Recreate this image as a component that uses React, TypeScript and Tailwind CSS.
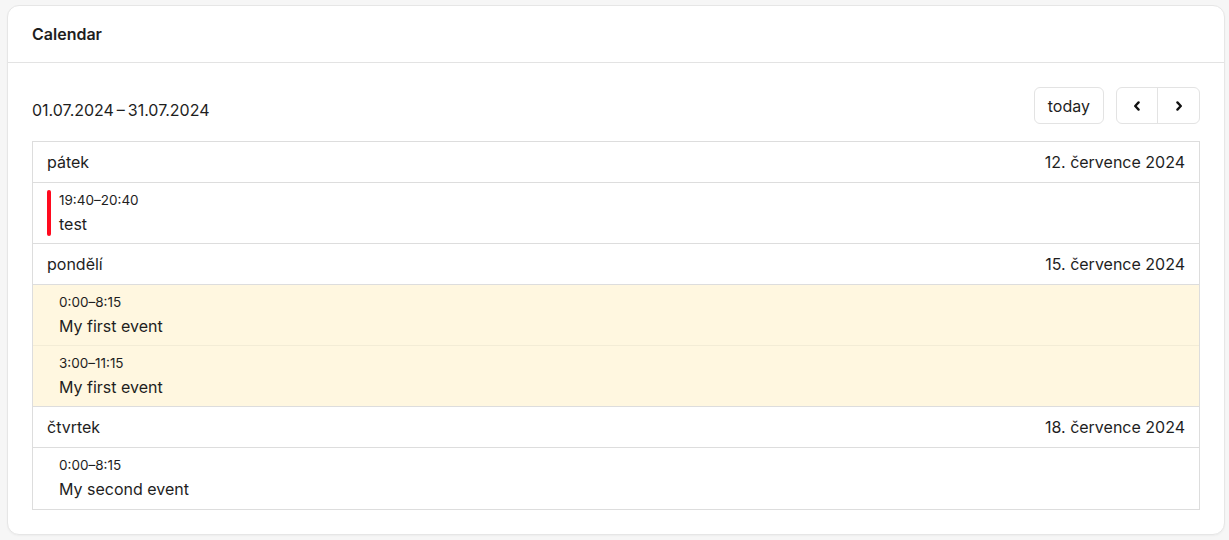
import React from 'react';

type CalEvent = { time: string; title: string; bar?: string; bg?: string };
type Day = { name: string; date: string; events: CalEvent[] };

const days: Day[] = [
  {
    name: 'pátek',
    date: '12. července 2024',
    events: [{ time: '19:40–20:40', title: 'test', bar: '#ff0a1e' }],
  },
  {
    name: 'pondělí',
    date: '15. července 2024',
    events: [
      { time: '0:00–8:15', title: 'My first event', bg: '#fff7e0' },
      { time: '3:00–11:15', title: 'My first event', bg: '#fff7e0' },
    ],
  },
  {
    name: 'čtvrtek',
    date: '18. července 2024',
    events: [{ time: '0:00–8:15', title: 'My second event' }],
  },
];

function ChevronLeft() {
  return (
    <svg width="10" height="10" viewBox="0 0 10 10" fill="none">
      <path d="M6.6 1.4L3.2 5l3.4 3.6" stroke="#111" strokeWidth="2.3" strokeLinecap="round" strokeLinejoin="round" />
    </svg>
  );
}

function ChevronRight() {
  return (
    <svg width="10" height="10" viewBox="0 0 10 10" fill="none">
      <path d="M3.4 1.4L6.8 5 3.4 8.6" stroke="#111" strokeWidth="2.3" strokeLinecap="round" strokeLinejoin="round" />
    </svg>
  );
}

function EventRow({ ev, first, last }: { ev: CalEvent; first: boolean; last: boolean }) {
  return (
    <div
      className={`flex gap-[8px] px-[14px] pt-[7px] pb-[7px] ${first ? (last ? 'h-[61px]' : 'h-[60px]') : 'h-[61px] border-t border-[#f3ecd6]'}`}
      style={{ backgroundColor: ev.bg || '#ffffff' }}>
      <div className="w-[4px] rounded-full" style={{ backgroundColor: ev.bar || 'transparent' }} />
      <div className="flex flex-col">
        <span className="text-[13.5px] leading-[20px]">{ev.time}</span>
        <span className="text-[16px] leading-[28px]">{ev.title}</span>
      </div>
    </div>
  );
}

export default function App() {
  return (
    <div
      className="min-h-[540px] bg-[#f6f6f6] pl-[7px] pr-[4px] pt-[5px] pb-[5px] text-[#1e1e1e]"
      style={{ fontFamily: 'Inter, "Noto Sans", sans-serif' }}>
      <div className="rounded-xl border border-[#e6e6e6] bg-white shadow-[0_1px_2px_rgba(0,0,0,0.04)]">
        <div className="h-[57px] px-6 flex items-center border-b border-[#e3e3e3]">
          <h2 className="text-[16px] font-semibold">Calendar</h2>
        </div>
        <div className="p-6">
          <div className="flex items-center justify-between mb-[17px]">
            <span className="text-[16px] pt-[9px]">01.07.2024{'\u2009–\u2009'}31.07.2024</span>
            <div className="flex items-center gap-3">
              <button className="h-[37px] px-[13px] border border-[#e3e3e3] rounded-md text-[16px]">
                today
              </button>
              <div className="flex h-[37px] border border-[#e3e3e3] rounded-md">
                <button className="w-[41px] flex items-center justify-center border-r border-[#e3e3e3]">
                  <ChevronLeft />
                </button>
                <button className="w-[41px] flex items-center justify-center">
                  <ChevronRight />
                </button>
              </div>
            </div>
          </div>
          <div className="border border-[#dddddd]">
            {days.map((day, i) => (
              <div key={day.date} className={i > 0 ? 'border-t border-[#dddddd]' : ''}>
                <div className="h-[41px] px-[14px] flex items-center justify-between border-b border-[#dddddd] text-[16px]">
                  <span>{day.name}</span>
                  <span>{day.date}</span>
                </div>
                {day.events.map((ev, j) => (
                  <EventRow
                    key={j}
                    ev={ev}
                    first={j === 0}
                    last={i === days.length - 1 && j === day.events.length - 1}
                  />
                ))}
              </div>
            ))}
          </div>
        </div>
      </div>
    </div>
  );
}
